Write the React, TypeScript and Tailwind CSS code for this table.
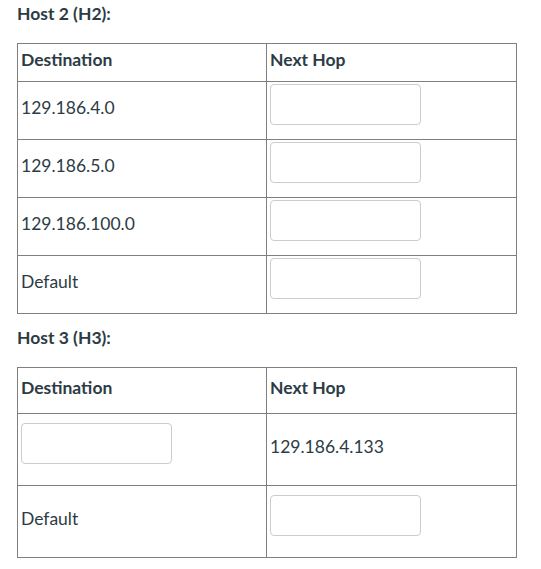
const Blank = () => (
  <input
    type="text"
    className="block w-[151px] h-[41px] mb-[7px] border border-[#c7cdd1] rounded-[4px] bg-white px-2 outline-none"
  />
);

type Cell = string | null;

const RouteTable = ({
  rows,
  headH,
  rowH,
}: {
  rows: [Cell, Cell][];
  headH: string;
  rowH: string[];
}) => (
  <table className="w-[500px] table-fixed border-collapse text-[17.5px] text-[#2d3b45]">
    <thead>
      <tr>
        <th className={`w-[249px] ${headH} border border-[#808080] px-[3px] pb-[5px] text-left font-bold align-middle`}>
          Destination
        </th>
        <th className={`${headH} border border-[#808080] px-[3px] pb-[5px] text-left font-bold align-middle`}>
          Next Hop
        </th>
      </tr>
    </thead>
    <tbody>
      {rows.map((r, i) => (
        <tr key={i}>
          {r.map((c, j) => (
            <td key={j} className={`${rowH[i]} border border-[#808080] px-[3px] pb-[5px] align-middle`}>
              {c === null ? <Blank /> : c}
            </td>
          ))}
        </tr>
      ))}
    </tbody>
  </table>
);

export default function App() {
  return (
    <div className="min-h-[569px] bg-white pl-[17px] pt-[2px] font-['Lato','Liberation_Sans',sans-serif] text-[#2d3b45]">
      <h2 className="h-[24px] text-[17.5px] font-bold leading-[24px]">Host 2 (H2):</h2>
      <div className="mt-[17px]">
        <RouteTable
          headH="h-[38px]"
          rowH={["h-[58px]", "h-[58px]", "h-[58px]", "h-[58px]"]}
          rows={[
            ["129.186.4.0", null],
            ["129.186.5.0", null],
            ["129.186.100.0", null],
            ["Default", null],
          ]}
        />
      </div>
      <h2 className="mt-[12px] h-[24px] text-[17.5px] font-bold leading-[24px]">Host 3 (H3):</h2>
      <div className="mt-[17px]">
        <RouteTable
          headH="h-[46px]"
          rowH={["h-[72px]", "h-[72px]"]}
          rows={[
            [null, "129.186.4.133"],
            ["Default", null],
          ]}
        />
      </div>
    </div>
  );
}
